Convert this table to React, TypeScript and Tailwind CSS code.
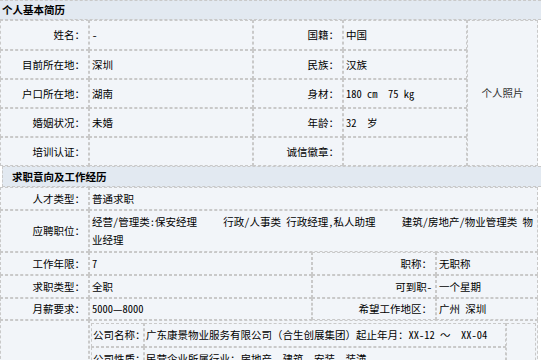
const cell = "border border-dashed border-[#c9c9c9] bg-[#f2f5f9] flex items-center";

function Label({ children, className = "" }: { children?: React.ReactNode; className?: string }) {
  return <div className={`${cell} justify-end pr-[3px] whitespace-nowrap ${className}`}>{children}</div>;
}

function Value({ children, className = "" }: { children?: React.ReactNode; className?: string }) {
  return <div className={`${cell} pl-[2px] whitespace-pre ${className}`}>{children}</div>;
}

function SectionHeader({ children, className = "" }: { children: React.ReactNode; className?: string }) {
  return (
    <div
      className={`border-y border-dashed border-[#c9c9c9] bg-[#e2e9f1] flex items-center font-bold text-black ${className}`}
    >
      {children}
    </div>
  );
}

export default function App() {
  return (
    <div className="w-[541px] h-[360px] overflow-hidden bg-white text-[10.5px] leading-[18px] text-black font-['Noto_Sans_Mono_CJK_SC','Noto_Sans_CJK_SC',sans-serif]">
      {/* 个人基本简历 */}
      <SectionHeader className="h-[20px] pl-[2px]">个人基本简历</SectionHeader>
      <div className="grid w-[538px] grid-cols-[89px_164px_90px_124px_71px] grid-rows-[30px_29px_29px_29px_29px]">
        <Label>姓名：</Label>
        <Value>-</Value>
        <Label>国籍：</Label>
        <Value>中国</Value>
        <div className={`${cell} row-span-5 justify-center text-[#333]`}>个人照片</div>

        <Label>目前所在地：</Label>
        <Value>深圳</Value>
        <Label>民族：</Label>
        <Value>汉族</Value>

        <Label>户口所在地：</Label>
        <Value>湖南</Value>
        <Label>身材：</Label>
        <Value>180 cm  75 kg</Value>

        <Label>婚姻状况：</Label>
        <Value>未婚</Value>
        <Label>年龄：</Label>
        <Value>32  岁</Value>

        <Label>培训认证：</Label>
        <Value />
        <Label>诚信徽章：</Label>
        <Value />
      </div>

      {/* 求职意向及工作经历 */}
      <SectionHeader className="h-[21px] ml-[2px] border-l pl-[9px]">求职意向及工作经历</SectionHeader>
      <div className="grid w-[538px] grid-cols-[89px_223px_124px_102px] grid-rows-[23px_42px_23px_23px_22px]">
        <Label>人才类型：</Label>
        <Value className="col-span-3">普通求职</Value>

        <Label>应聘职位：</Label>
        <Value className="col-span-3">
          <div>
            经营/管理类:保安经理     行政/人事类 行政经理,私人助理     建筑/房地产/物业管理类 物
            <br />
            业经理
          </div>
        </Value>

        <Label>工作年限：</Label>
        <Value>7</Value>
        <Label className="bg-[#edf2f9] pr-[1px]">职称：</Label>
        <Value>无职称</Value>

        <Label>求职类型：</Label>
        <Value>全职</Value>
        <Label className="bg-[#edf2f9] pr-[1px]">可到职-</Label>
        <Value>一个星期</Value>

        <Label>月薪要求：</Label>
        <Value>5000—8000</Value>
        <Label className="bg-[#edf2f9] pr-[1px]">希望工作地区：</Label>
        <Value>广州 深圳</Value>
      </div>

      {/* 工作经历 */}
      <div className="grid w-[538px] grid-cols-[89px_449px]">
        <div className={`${cell} h-[80px]`} />
        <div className="border border-dashed border-[#c9c9c9] bg-[#f2f5f9] p-[1px] pt-[2px]">
          <div className="grid grid-cols-[53px_362px_1fr] grid-rows-[24px_24px_24px]">
            <div className={`${cell} pl-[1px] whitespace-nowrap`}>公司名称：</div>
            <div className={`${cell} pl-[1px] whitespace-pre`}>广东康景物业服务有限公司（合生创展集团）起止年月：XX-12 ～  XX-04</div>
            <div className={`${cell} row-span-3`} />
            <div className={`${cell} pl-[1px] whitespace-nowrap`}>公司性质：</div>
            <div className={`${cell} pl-[1px] whitespace-nowrap`}>民营企业所属行业：房地产、建筑、安装、装潢</div>
            <div className={`${cell} pl-[1px] whitespace-nowrap`}>担任职位：</div>
            <div className={`${cell} pl-[1px] whitespace-nowrap`}>保安经理</div>
          </div>
        </div>
      </div>
    </div>
  );
}
